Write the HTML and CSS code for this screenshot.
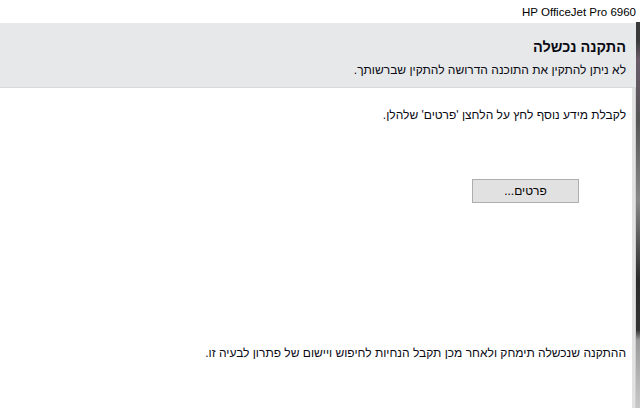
FILE: index.html
```html
<!DOCTYPE html>
<html lang="he">
<head>
<meta charset="utf-8">
<link rel="stylesheet" href="styles.css">
</head>
<body>
<div class="window">
  <div class="main">
    <div class="titlebar"><span class="title">HP OfficeJet Pro 6960</span></div>
    <div class="band" dir="rtl">
      <div class="band-title">התקנה נכשלה</div>
      <div class="band-text">לא ניתן להתקין את התוכנה הדרושה להתקין שברשותך.</div>
    </div>
    <div class="content-row">
      <div class="content" dir="rtl">
        <p class="info">לקבלת מידע נוסף לחץ על הלחצן 'פרטים' שלהלן.</p>
        <div class="btn-row"><button class="btn">פרטים...</button></div>
        <p class="note">ההתקנה שנכשלה תימחק ולאחר מכן תקבל הנחיות לחיפוש ויישום של פתרון לבעיה זו.</p>
      </div>
      <div class="inner-edge"></div>
    </div>
  </div>
  <div class="outer-edge"></div>
</div>
</body>
</html>
```

FILE: styles.css
```css
html, body {
  margin: 0;
  padding: 0;
  width: 640px;
  height: 408px;
  overflow: hidden;
  background: #ffffff;
}
body {
  font-family: "Liberation Sans", "DejaVu Sans", sans-serif;
  font-size: 12px;
  color: #0a0a14;
}
.window {
  display: flex;
  flex-direction: row;
  height: 408px;
}
.main {
  width: 636px;
  display: flex;
  flex-direction: column;
}
.outer-edge {
  width: 4px;
  background: linear-gradient(to bottom, #ffffff 0, #ffffff 22px, #3a3a3a 22px, #3a3a3a 40px, #6a5a6a 60px, #555 120px, #888 200px, #2a2a2a 280px, #333 330px, #9a9a9a 340px, #c8c8c8 408px);
}
.titlebar {
  height: 23px;
  display: flex;
  align-items: center;
  justify-content: flex-end;
  padding-right: 0;
  background: #ffffff;
}
.title {
  font-size: 11.5px;
  color: #000;
}
.band {
  height: 65px;
  background: #e6e8e9;
  border-bottom: 1px solid #d7d9da;
  padding-right: 10px;
  box-sizing: border-box;
  display: flex;
  flex-direction: column;
}
.band-title {
  font-weight: bold;
  font-size: 14.5px;
  margin-top: 15px;
  line-height: 18px;
}
.band-text {
  margin-top: 6px;
  font-size: 12px;
  line-height: 16px;
}
.content-row {
  flex: 1;
  display: flex;
  flex-direction: row;
}
.content {
  width: 632px;
  background: #ffffff;
  padding-right: 6px;
  box-sizing: border-box;
  display: flex;
  flex-direction: column;
}
.inner-edge {
  width: 4px;
  background: #e2e2e2;
  border-right: 1px solid #cfcfcf;
  box-sizing: border-box;
}
.info {
  margin: 19px 0 0 0;
  font-size: 12px;
  line-height: 16px;
}
.btn-row {
  display: flex;
  margin-top: 56px;
  padding-right: 47px;
}
.btn {
  width: 107px;
  height: 24px;
  background: #e1e1e1;
  border: 1px solid #adadad;
  font-family: "Liberation Sans", "DejaVu Sans", sans-serif;
  font-size: 12px;
  color: #000;
  padding: 0;
  margin: 0;
}
.note {
  margin: 142px 0 0 0;
  font-size: 12px;
  line-height: 16px;
}
```
